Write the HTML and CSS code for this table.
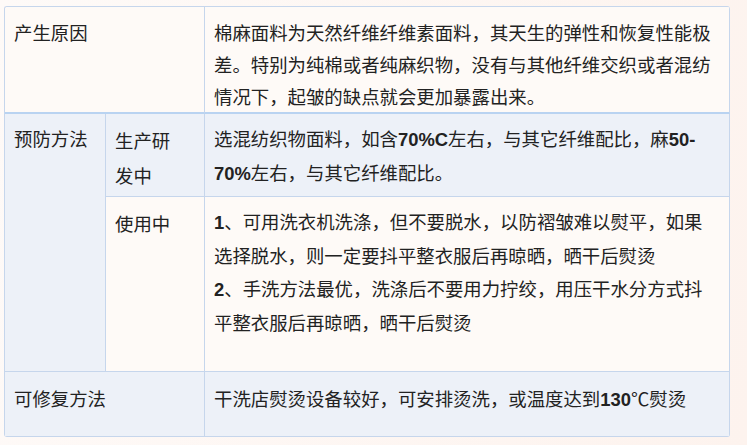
FILE: index.html
```html
<!DOCTYPE html>
<html lang="zh-CN">
<head>
<meta charset="utf-8">
<link rel="stylesheet" href="styles.css">
</head>
<body>
<table class="care">
  <colgroup>
    <col class="c1"><col class="c2"><col class="c3">
  </colgroup>
  <tr class="r1 warm">
    <td colspan="2">产生原因</td>
    <td>棉麻面料为天然纤维纤维素面料，其天生的弹性和恢复性能极差。特别为纯棉或者纯麻织物，没有与其他纤维交织或者混纺情况下，起皱的缺点就会更加暴露出来。</td>
  </tr>
  <tr class="r2 cool">
    <td rowspan="2" class="cool">预防方法</td>
    <td class="mid">生产研发中</td>
    <td>选混纺织物面料，如含<span class="num">70%C</span>左右，与其它纤维配比，麻<span class="num">50-</span><wbr><span class="num">70%</span>左右，与其它纤维配比。</td>
  </tr>
  <tr class="r3 warm">
    <td class="mid">使用中</td>
    <td><span class="num">1</span>、可用洗衣机洗涤，但不要脱水，以防褶皱难以熨平，如果选择脱水，则一定要抖平整衣服后再晾晒，晒干后熨烫<br><span class="num">2</span>、手洗方法最优，洗涤后不要用力拧绞，用压干水分方式抖平整衣服后再晾晒，晒干后熨烫</td>
  </tr>
  <tr class="r4 cool">
    <td colspan="2">可修复方法</td>
    <td>干洗店熨烫设备较好，可安排烫洗，或温度达到<span class="num">130</span>℃熨烫</td>
  </tr>
</table>
</body>
</html>
```

FILE: styles.css
```css
html, body {
  margin: 0;
  padding: 0;
}
body {
  background: linear-gradient(100deg, #fefaf8 0%, #fdf3ee 100%);
  width: 747px;
  height: 445px;
  overflow: hidden;
  padding: 6px 0 0 4px;
  box-sizing: border-box;
  font-family: "Noto Sans CJK SC", "Liberation Sans", sans-serif;
  font-size: 18.4px;
  color: #222;
  text-spacing-trim: space-all;
}
.care {
  width: 725px;
  table-layout: fixed;
  border-collapse: separate;
  border-spacing: 0;
  border-top: 1px solid #c6d6ec;
  border-left: 1px solid #c6d6ec;
  border-radius: 3px;
  overflow: hidden;
}
.c1 { width: 101px; }
.c2 { width: 99px; }
.c3 { width: 525px; }
.care td {
  border-right: 1px solid #c6d6ec;
  border-bottom: 1px solid #c6d6ec;
  padding: 8px 13px 0 9px;
  vertical-align: top;
  line-height: 33px;
  box-sizing: border-box;
}
.care td.mid {
  padding-right: 20px;
  line-height: 35px;
  padding-top: 9px;
}
.warm td { background: #fefaf7; }
.cool td, td.cool { background: #edf1f8; }
.r1 td {
  height: 105px;
  padding-top: 9px;
  line-height: 32px;
  border-bottom: 2px solid #b9d3f1;
}
.r2 td { height: 83px; }
.r3 td { height: 175px; }
.r4 td { height: 65px; padding-top: 10px; }
.num {
  font-family: "Liberation Sans", Arial, sans-serif;
  font-weight: bold;
}
```
